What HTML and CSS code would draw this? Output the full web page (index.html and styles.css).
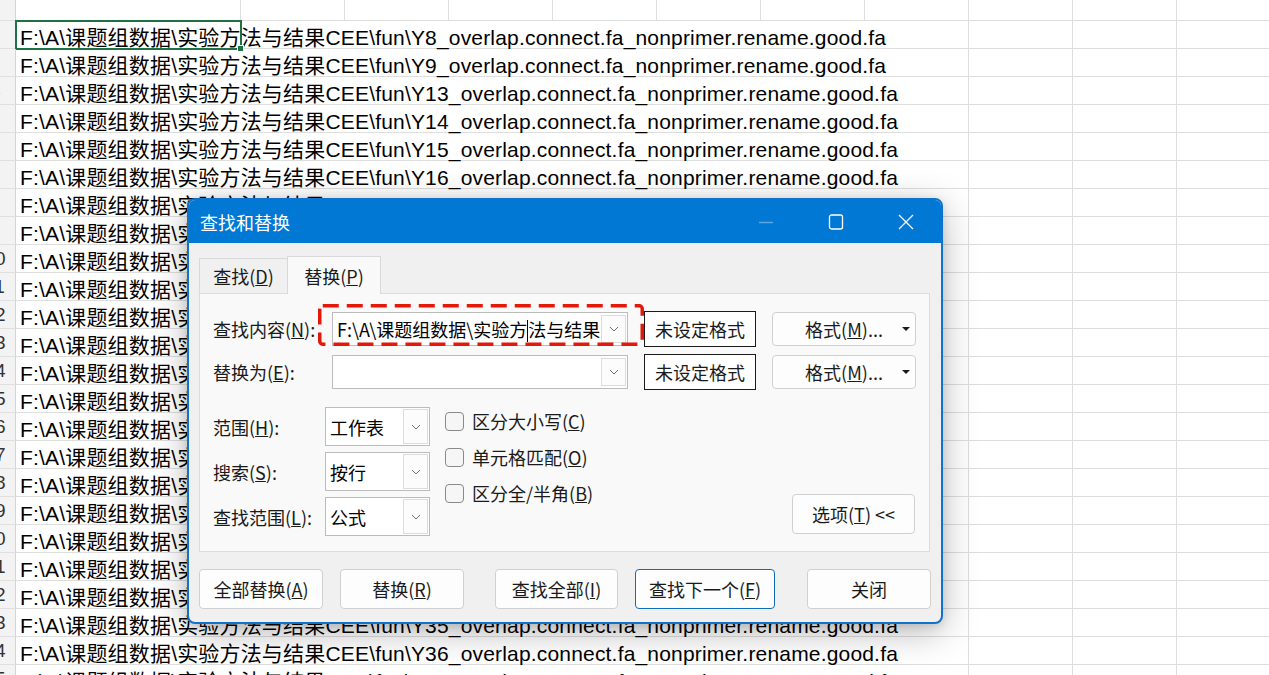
FILE: index.html
```html
<!DOCTYPE html>
<html lang="zh-CN">
<head>
    <meta charset="UTF-8">
    <meta name="viewport" content="width=device-width, initial-scale=1.0">
    <title>查找和替换</title>
    <link rel="stylesheet" href="styles.css">
</head>
<body>
    <div class="sheet">
        <div class="row row-top">
            <div class="rh"><span>1</span></div>
            <div class="cell col-a"></div>
            <div class="cell"></div><div class="cell"></div><div class="cell"></div><div class="cell"></div><div class="cell"></div>
            <div class="cell"></div><div class="cell"></div><div class="cell"></div><div class="cell"></div><div class="cell"></div>
        </div>
        <div class="row">
            <div class="rh"><span>2</span></div>
            <div class="cell wide">F:\A\课题组数据\实验方法与结果CEE\fun\Y8_overlap.connect.fa_nonprimer.rename.good.fa</div>
            <div class="cell"></div><div class="cell"></div><div class="cell"></div>
            <div class="active-cell"><i class="fill-handle"></i></div>
        </div>
        <div class="row">
            <div class="rh"><span>3</span></div>
            <div class="cell wide">F:\A\课题组数据\实验方法与结果CEE\fun\Y9_overlap.connect.fa_nonprimer.rename.good.fa</div>
            <div class="cell"></div><div class="cell"></div><div class="cell"></div>
        </div>
        <div class="row">
            <div class="rh"><span>4</span></div>
            <div class="cell wide">F:\A\课题组数据\实验方法与结果CEE\fun\Y13_overlap.connect.fa_nonprimer.rename.good.fa</div>
            <div class="cell"></div><div class="cell"></div><div class="cell"></div>
        </div>
        <div class="row">
            <div class="rh"><span>5</span></div>
            <div class="cell wide">F:\A\课题组数据\实验方法与结果CEE\fun\Y14_overlap.connect.fa_nonprimer.rename.good.fa</div>
            <div class="cell"></div><div class="cell"></div><div class="cell"></div>
        </div>
        <div class="row">
            <div class="rh"><span>6</span></div>
            <div class="cell wide">F:\A\课题组数据\实验方法与结果CEE\fun\Y15_overlap.connect.fa_nonprimer.rename.good.fa</div>
            <div class="cell"></div><div class="cell"></div><div class="cell"></div>
        </div>
        <div class="row">
            <div class="rh"><span>7</span></div>
            <div class="cell wide">F:\A\课题组数据\实验方法与结果CEE\fun\Y16_overlap.connect.fa_nonprimer.rename.good.fa</div>
            <div class="cell"></div><div class="cell"></div><div class="cell"></div>
        </div>
        <div class="row">
            <div class="rh"><span>8</span></div>
            <div class="cell wide">F:\A\课题组数据\实验方法与结果CEE\fun\Y17_overlap.connect.fa_nonprimer.rename.good.fa</div>
            <div class="cell"></div><div class="cell"></div><div class="cell"></div>
        </div>
        <div class="row">
            <div class="rh"><span>9</span></div>
            <div class="cell wide">F:\A\课题组数据\实验方法与结果CEE\fun\Y18_overlap.connect.fa_nonprimer.rename.good.fa</div>
            <div class="cell"></div><div class="cell"></div><div class="cell"></div>
        </div>
        <div class="row">
            <div class="rh"><span>10</span></div>
            <div class="cell wide">F:\A\课题组数据\实验方法与结果CEE\fun\Y19_overlap.connect.fa_nonprimer.rename.good.fa</div>
            <div class="cell"></div><div class="cell"></div><div class="cell"></div>
        </div>
        <div class="row">
            <div class="rh"><span>11</span></div>
            <div class="cell wide">F:\A\课题组数据\实验方法与结果CEE\fun\Y20_overlap.connect.fa_nonprimer.rename.good.fa</div>
            <div class="cell"></div><div class="cell"></div><div class="cell"></div>
        </div>
        <div class="row">
            <div class="rh"><span>12</span></div>
            <div class="cell wide">F:\A\课题组数据\实验方法与结果CEE\fun\Y21_overlap.connect.fa_nonprimer.rename.good.fa</div>
            <div class="cell"></div><div class="cell"></div><div class="cell"></div>
        </div>
        <div class="row">
            <div class="rh"><span>13</span></div>
            <div class="cell wide">F:\A\课题组数据\实验方法与结果CEE\fun\Y22_overlap.connect.fa_nonprimer.rename.good.fa</div>
            <div class="cell"></div><div class="cell"></div><div class="cell"></div>
        </div>
        <div class="row">
            <div class="rh"><span>14</span></div>
            <div class="cell wide">F:\A\课题组数据\实验方法与结果CEE\fun\Y23_overlap.connect.fa_nonprimer.rename.good.fa</div>
            <div class="cell"></div><div class="cell"></div><div class="cell"></div>
        </div>
        <div class="row">
            <div class="rh"><span>15</span></div>
            <div class="cell wide">F:\A\课题组数据\实验方法与结果CEE\fun\Y24_overlap.connect.fa_nonprimer.rename.good.fa</div>
            <div class="cell"></div><div class="cell"></div><div class="cell"></div>
        </div>
        <div class="row">
            <div class="rh"><span>16</span></div>
            <div class="cell wide">F:\A\课题组数据\实验方法与结果CEE\fun\Y25_overlap.connect.fa_nonprimer.rename.good.fa</div>
            <div class="cell"></div><div class="cell"></div><div class="cell"></div>
        </div>
        <div class="row">
            <div class="rh"><span>17</span></div>
            <div class="cell wide">F:\A\课题组数据\实验方法与结果CEE\fun\Y26_overlap.connect.fa_nonprimer.rename.good.fa</div>
            <div class="cell"></div><div class="cell"></div><div class="cell"></div>
        </div>
        <div class="row">
            <div class="rh"><span>18</span></div>
            <div class="cell wide">F:\A\课题组数据\实验方法与结果CEE\fun\Y28_overlap.connect.fa_nonprimer.rename.good.fa</div>
            <div class="cell"></div><div class="cell"></div><div class="cell"></div>
        </div>
        <div class="row">
            <div class="rh"><span>19</span></div>
            <div class="cell wide">F:\A\课题组数据\实验方法与结果CEE\fun\Y29_overlap.connect.fa_nonprimer.rename.good.fa</div>
            <div class="cell"></div><div class="cell"></div><div class="cell"></div>
        </div>
        <div class="row">
            <div class="rh"><span>20</span></div>
            <div class="cell wide">F:\A\课题组数据\实验方法与结果CEE\fun\Y30_overlap.connect.fa_nonprimer.rename.good.fa</div>
            <div class="cell"></div><div class="cell"></div><div class="cell"></div>
        </div>
        <div class="row">
            <div class="rh"><span>21</span></div>
            <div class="cell wide">F:\A\课题组数据\实验方法与结果CEE\fun\Y32_overlap.connect.fa_nonprimer.rename.good.fa</div>
            <div class="cell"></div><div class="cell"></div><div class="cell"></div>
        </div>
        <div class="row">
            <div class="rh"><span>22</span></div>
            <div class="cell wide">F:\A\课题组数据\实验方法与结果CEE\fun\Y33_overlap.connect.fa_nonprimer.rename.good.fa</div>
            <div class="cell"></div><div class="cell"></div><div class="cell"></div>
        </div>
        <div class="row">
            <div class="rh"><span>23</span></div>
            <div class="cell wide">F:\A\课题组数据\实验方法与结果CEE\fun\Y35_overlap.connect.fa_nonprimer.rename.good.fa</div>
            <div class="cell"></div><div class="cell"></div><div class="cell"></div>
        </div>
        <div class="row">
            <div class="rh"><span>24</span></div>
            <div class="cell wide">F:\A\课题组数据\实验方法与结果CEE\fun\Y36_overlap.connect.fa_nonprimer.rename.good.fa</div>
            <div class="cell"></div><div class="cell"></div><div class="cell"></div>
        </div>
        <div class="row">
            <div class="rh"><span>25</span></div>
            <div class="cell wide">F:\A\课题组数据\实验方法与结果CEE\fun\Y37_overlap.connect.fa_nonprimer.rename.good.fa</div>
            <div class="cell"></div><div class="cell"></div><div class="cell"></div>
        </div>
    </div>

    <div class="dialog">
        <div class="titlebar">
            <span class="title">查找和替换</span>
            <div class="win-btns">
                <span class="win-btn win-min">
                    <svg width="16" height="16" viewBox="0 0 16 16"><line x1="1" y1="8.5" x2="15" y2="8.5"/></svg>
                </span>
                <span class="win-btn">
                    <svg width="16" height="16" viewBox="0 0 16 16"><rect x="1.5" y="1" width="13" height="14" rx="2"/></svg>
                </span>
                <span class="win-btn">
                    <svg width="16" height="16" viewBox="0 0 16 16"><path d="M1 1 L15 15 M15 1 L1 15"/></svg>
                </span>
            </div>
        </div>

        <div class="dlg-body">
            <div class="tabs">
                <div class="tab">查找(<u>D</u>)</div>
                <div class="tab active">替换(<u>P</u>)</div>
            </div>

            <div class="panel">
                <div class="field-row">
                    <label class="lbl">查找内容(<u>N</u>):</label>
                    <div class="combo combo-find">
                        <span class="combo-text">F:\A\课题组数据\实验方<i class="caret"></i>法与结果CEE\fun\</span>
                        <span class="drop"><svg width="10" height="6" viewBox="0 0 10 6"><polyline points="1,1 5,5 9,1"/></svg></span>
                    </div>
                    <div class="fmt-box">未设定格式</div>
                    <button class="btn fmt-btn">格式(<u>M</u>)...<i class="tri"></i></button>
                </div>
                <div class="field-row">
                    <label class="lbl">替换为(<u>E</u>):</label>
                    <div class="combo combo-find">
                        <span class="combo-text"></span>
                        <span class="drop"><svg width="10" height="6" viewBox="0 0 10 6"><polyline points="1,1 5,5 9,1"/></svg></span>
                    </div>
                    <div class="fmt-box">未设定格式</div>
                    <button class="btn fmt-btn">格式(<u>M</u>)...<i class="tri"></i></button>
                </div>

                <div class="lower">
                    <div class="opt-col">
                        <div class="opt-row">
                            <label class="lbl">范围(<u>H</u>):</label>
                            <div class="combo combo-sm">
                                <span class="combo-text">工作表</span>
                                <span class="drop"><svg width="10" height="6" viewBox="0 0 10 6"><polyline points="1,1 5,5 9,1"/></svg></span>
                            </div>
                        </div>
                        <div class="opt-row">
                            <label class="lbl">搜索(<u>S</u>):</label>
                            <div class="combo combo-sm">
                                <span class="combo-text">按行</span>
                                <span class="drop"><svg width="10" height="6" viewBox="0 0 10 6"><polyline points="1,1 5,5 9,1"/></svg></span>
                            </div>
                        </div>
                        <div class="opt-row">
                            <label class="lbl">查找范围(<u>L</u>):</label>
                            <div class="combo combo-sm">
                                <span class="combo-text">公式</span>
                                <span class="drop"><svg width="10" height="6" viewBox="0 0 10 6"><polyline points="1,1 5,5 9,1"/></svg></span>
                            </div>
                        </div>
                    </div>

                    <div class="check-col">
                        <div class="check-row"><span class="box"></span>区分大小写(<u>C</u>)</div>
                        <div class="check-row"><span class="box"></span>单元格匹配(<u>O</u>)</div>
                        <div class="check-row"><span class="box"></span>区分全/半角(<u>B</u>)</div>
                    </div>

                    <button class="btn opt-btn">选项(<u>T</u>) &lt;&lt;</button>
                </div>
            </div>

            <div class="actions">
                <button class="btn act">全部替换(<u>A</u>)</button>
                <button class="btn act act-2">替换(<u>R</u>)</button>
                <button class="btn act act-3">查找全部(<u>I</u>)</button>
                <button class="btn act act-4">查找下一个(<u>F</u>)</button>
                <button class="btn act act-5">关闭</button>
            </div>
        </div>

        <svg class="mark" width="326" height="42" viewBox="0 0 326 42">
            <rect x="1.75" y="1.75" width="322.5" height="38.5" rx="3"/>
        </svg>
    </div>
</body>
</html>
```

FILE: styles.css
```css
* {
    box-sizing: border-box;
}

body {
    margin: 0;
    height: 675px;
    overflow: hidden;
    background-color: #ffffff;
    font-family: "Liberation Sans", "Noto Sans CJK SC", sans-serif;
    position: relative;
}

/* hoja de cálculo */
.row {
    display: flex;
    height: 28px;
    position: relative;
}

.row-top {
    height: 21px;
}

.rh {
    flex: none;
    width: 16px;
    overflow: hidden;
    background-color: #f3f3f3;
    border-right: 1px solid #d4d4d4;
    border-bottom: 1px solid #e0e0e0;
}

.rh span {
    display: block;
    width: 40px;
    margin-left: -25px;
    text-align: center;
    font-size: 19px;
    line-height: 27px;
    color: #333;
}

.cell {
    flex: none;
    width: 104px;
    border-right: 1px solid #dedede;
    border-bottom: 1px solid #dedede;
}

.col-a {
    width: 225px;
}

.wide {
    width: 953px;
    padding: 3px 0 0 4px;
    font-size: 21px;
    letter-spacing: 0.18px;
    line-height: 27px;
    white-space: nowrap;
    color: #000;
}

.active-cell {
    position: absolute;
    left: 15px;
    top: -1px;
    width: 227px;
    height: 30px;
    border: 2px solid #1e7145;
}

.fill-handle {
    position: absolute;
    right: -4px;
    bottom: -4px;
    width: 7px;
    height: 7px;
    background-color: #1e7145;
    border: 1px solid #fff;
}

/* ventana de diálogo */
.dialog {
    position: absolute;
    left: 187px;
    top: 198px;
    width: 756px;
    height: 426px;
    border: 2px solid #1271c8;
    border-radius: 8px;
    background-color: #f0f0f0;
    box-shadow: 0 8px 36px rgba(0, 0, 0, 0.28), 0 2px 8px rgba(0, 0, 0, 0.12);
    overflow: hidden;
    font-family: "Noto Sans CJK SC", sans-serif;
    font-size: 18px;
    line-height: 24px;
    color: #1a1a1a;
}

.titlebar {
    display: flex;
    align-items: center;
    height: 43px;
    background-color: #0078d4;
    color: #fff;
}

.title {
    padding-left: 11px;
}

.win-btns {
    margin-left: auto;
    display: flex;
}

.win-btn {
    width: 70px;
    height: 43px;
    display: flex;
    align-items: center;
    justify-content: center;
}

.win-btn svg {
    fill: none;
    stroke: #fff;
    stroke-width: 1.3;
}

.win-min svg {
    stroke: rgba(255, 255, 255, 0.35);
}

.dlg-body {
    padding: 13px 11px 0 10px;
}

.tabs {
    display: flex;
    align-items: flex-end;
    height: 37px;
}

.tab {
    width: 89px;
    height: 35px;
    border: 1px solid #d9d9d9;
    border-bottom: none;
    background-color: #f0f0f0;
    display: flex;
    align-items: center;
    justify-content: center;
}

.tab.active {
    width: 94px;
    height: 38px;
    margin-left: -1px;
    margin-bottom: -1px;
    background-color: #f9f9f9;
    position: relative;
    z-index: 1;
}

.panel {
    height: 259px;
    border: 1px solid #dcdcdc;
    background-color: #f9f9f9;
    padding: 17px 14px 0 13px;
}

.field-row {
    display: flex;
    align-items: center;
    height: 36px;
}

.field-row + .field-row {
    margin-top: 7px;
}

.lbl {
    flex: none;
    width: 119px;
}

.combo {
    flex: none;
    display: flex;
    align-items: center;
    height: 34px;
    border: 1px solid #bcbcbc;
    background-color: #fff;
}

.combo-find {
    width: 296px;
    margin-right: 16px;
}

.combo-text {
    flex: 1;
    min-width: 0;
    padding-left: 4px;
    white-space: nowrap;
    overflow: hidden;
    color: #000;
}

.caret {
    display: inline-block;
    width: 1px;
    height: 22px;
    background-color: #000;
    vertical-align: -5px;
}

.drop {
    flex: none;
    width: 25px;
    height: 28px;
    margin-right: 1px;
    border: 1px solid #dcdcdc;
    background-color: #fcfcfc;
    display: flex;
    align-items: center;
    justify-content: center;
}

.drop svg {
    fill: none;
    stroke: #707070;
    stroke-width: 1;
}

.fmt-box {
    flex: none;
    width: 112px;
    height: 36px;
    margin-right: 16px;
    border: 1px solid #1a1a1a;
    background-color: #fff;
    display: flex;
    align-items: center;
    justify-content: center;
}

.btn {
    flex: none;
    padding: 0;
    border: 1px solid #d0d0d0;
    border-radius: 4px;
    background-color: #fdfdfd;
    font: inherit;
    color: inherit;
    display: flex;
    align-items: center;
    justify-content: center;
}

.fmt-btn {
    width: 144px;
    height: 34px;
    position: relative;
}

.tri {
    position: absolute;
    right: 5px;
    top: 50%;
    margin-top: -2px;
    border-left: 4px solid transparent;
    border-right: 4px solid transparent;
    border-top: 4px solid #1a1a1a;
}

.lower {
    display: flex;
    margin-top: 17px;
}

.opt-col {
    display: flex;
    flex-direction: column;
    gap: 6px;
}

.opt-row {
    display: flex;
    align-items: center;
    height: 39px;
}

.opt-row .lbl {
    width: 112px;
}

.combo-sm {
    width: 105px;
    height: 39px;
}

.combo-sm .drop {
    height: 35px;
}

.check-col {
    margin-left: 15px;
    margin-top: -4px;
    display: flex;
    flex-direction: column;
}

.check-row {
    display: flex;
    align-items: center;
    height: 36px;
}

.box {
    width: 19px;
    height: 19px;
    margin-right: 8px;
    border: 1px solid #8a8a8a;
    border-radius: 4px;
    background-color: #f6f6f6;
}

.opt-btn {
    margin-left: auto;
    align-self: flex-end;
    width: 123px;
    height: 40px;
    margin-bottom: 2px;
}

.actions {
    display: flex;
    margin-top: 17px;
}

.act {
    width: 124px;
    height: 40px;
}

.act-2 {
    margin-left: 17px;
}

.act-3 {
    width: 123px;
    margin-left: 31px;
}

.act-4 {
    width: 140px;
    margin-left: 17px;
    border-color: #0f6cbd;
}

.act-5 {
    margin-left: 32px;
}

/* marca roja de la captura */
.mark {
    position: absolute;
    left: 129px;
    top: 104px;
}

.mark rect {
    fill: none;
    stroke: #e3170a;
    stroke-width: 3.5;
    stroke-dasharray: 16 8;
}
```
